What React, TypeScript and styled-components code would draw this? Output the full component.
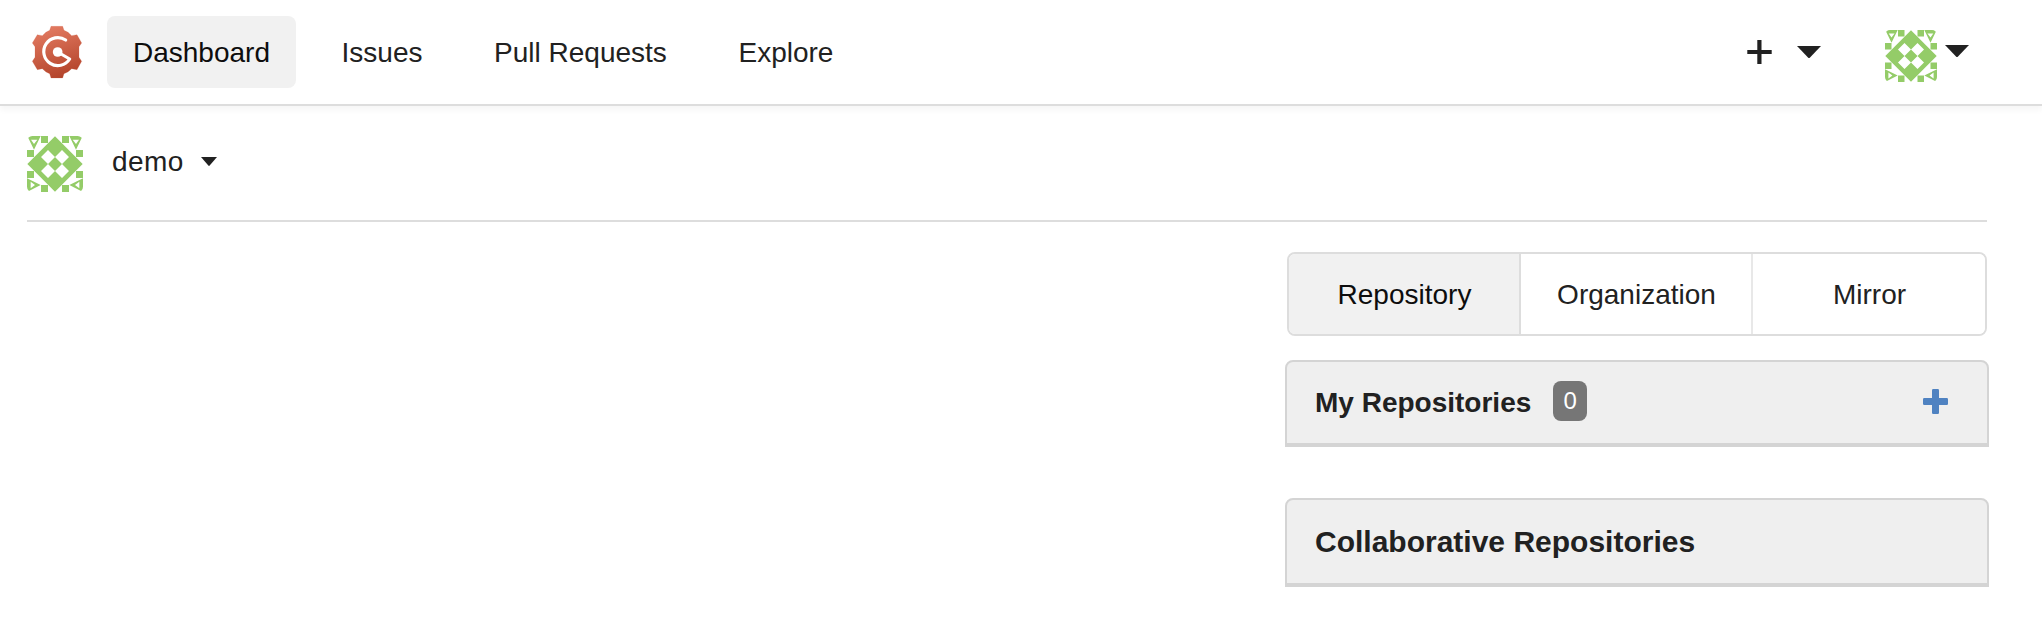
import React from 'react';
import styled, { createGlobalStyle } from 'styled-components';

const GlobalStyle = createGlobalStyle`
  * { box-sizing: border-box; }
  body {
    margin: 0;
    background: #fff;
    color: #212121;
    font-family: "Liberation Sans", Arial, sans-serif;
    font-size: 28px;
    line-height: 32px;
  }
`;

const Header = styled.header`
  display: flex;
  align-items: center;
  height: 106px;
  padding: 0 73px 0 31px;
  border-bottom: 2px solid #ddd;
  box-shadow: 0 4px 6px rgba(0, 0, 0, 0.04);
`;

const LogoLink = styled.a`
  display: flex;
  margin-right: 24px;
`;

const Nav = styled.nav`
  display: flex;
  flex: 1;
  gap: 19.6px;
`;

const NavItem = styled.a<{ $active?: boolean }>`
  display: flex;
  align-items: center;
  height: 72px;
  padding: 1px 26px 0;
  border-radius: 8px;
  color: ${(p) => (p.$active ? '#0d0d0d' : '#212121')};
  background: ${(p) => (p.$active ? '#f1f1f1' : 'transparent')};
`;

const CreateMenu = styled.div`
  display: flex;
  align-items: center;
  gap: 25px;
  margin-right: 64px;
`;

const UserMenu = styled.div`
  display: flex;
  align-items: flex-start;
  gap: 8px;
  padding-top: 8px;

  svg:last-child {
    margin-top: 15px;
  }
`;

const Page = styled.main`
  padding: 0 55px 0 27px;
`;

const ContextBar = styled.div`
  display: flex;
  align-items: center;
  height: 116px;
  border-bottom: 2px solid #ddd;
`;

const ContextSwitch = styled.div`
  display: flex;
  align-items: center;
  height: 56px;
  margin-top: 2px;

  svg:last-child {
    margin-bottom: 5px;
  }
`;

const ContextName = styled.span`
  margin: -4px 17px 0 29px;
  letter-spacing: 0.4px;
`;

const Sidebar = styled.aside`
  display: flex;
  flex-direction: column;
  width: 704px;
  margin: 30px -2px 0 auto;
`;

const Tabs = styled.div`
  display: grid;
  grid-template-columns: 232px 232px 1fr;
  height: 84px;
  margin: 0 2px 24px;
  border: 2px solid #ddd;
  border-radius: 8px;
  overflow: hidden;
`;

const Tab = styled.a<{ $active?: boolean }>`
  display: flex;
  align-items: center;
  justify-content: center;
  padding: 2px 0 0 1px;
  border-right: 2px solid ${(p) => (p.$active ? '#ddd' : '#e8e8e8')};
  color: ${(p) => (p.$active ? '#0d0d0d' : '#212121')};
  background: ${(p) => (p.$active ? '#f1f1f1' : '#fff')};

  &:last-child {
    border-right: 0;
  }
`;

const Panel = styled.h4<{ $large?: boolean }>`
  display: flex;
  align-items: center;
  height: ${(p) => (p.$large ? 89 : 87)}px;
  margin: 0 0 51px;
  padding: 0 39px 0 28px;
  border: 2px solid #d4d4d4;
  border-bottom-width: 4px;
  border-radius: 8px 8px 0 0;
  background: #efefef;
  font-size: ${(p) => (p.$large ? 30 : 28)}px;
  font-weight: 700;

  svg {
    margin-top: -2px;
  }
`;

const Count = styled.span`
  display: flex;
  align-items: center;
  justify-content: center;
  width: 34px;
  height: 40px;
  margin: -3px auto 0 22px;
  border-radius: 8px;
  background: #767676;
  color: #fff;
  font-size: 24px;
  font-weight: 400;
`;

const Logo = () => (
  <svg width="52" height="56" viewBox="93 72 156 168">
    <defs>
      <linearGradient id="gear" x1="0.3" y1="0" x2="0.6" y2="1">
        <stop offset="0" stopColor="#e37b62" />
        <stop offset="1" stopColor="#b3432a" />
      </linearGradient>
    </defs>
    <path
      d="M153 79H188L192 91Q205 95 215 107L231 104L245 129L237 140V172L245 184L231 209L215 206Q205 217 192 221L188 234H153L149 221Q137 217 127 206L112 209L97 184L105 172V140L97 129L112 104L127 107Q137 95 149 91Z"
      fill="url(#gear)"
      stroke="#cf5f45"
      strokeOpacity="0.3"
      strokeWidth="2"
      strokeLinejoin="round"
    />
    <path
      d="M197 120A42 42 0 1 0 209 177L173 156"
      fill="none"
      stroke="#fff"
      strokeWidth="9.5"
      strokeLinecap="round"
      strokeLinejoin="round"
    />
    <circle cx="173" cy="156" r="14.5" fill="#fff" />
  </svg>
);

const squares = [[42, 0], [105, 0], [0, 42], [147, 42], [0, 105], [147, 105], [42, 147], [105, 147]];

const Identicon = ({ size, clip }: { size: number; clip: string }) => (
  <svg width={size} height={size} viewBox="0 0 168 168" fill="#94cc68">
    <clipPath id={clip}>
      <rect width="168" height="168" rx="16" />
    </clipPath>
    <g clipPath={`url(#${clip})`} fillRule="evenodd">
      <path d="M84 1L167 84L84 167L1 84Z M63 42L42 63L63 84L84 63Z M105 42L84 63L105 84L126 63Z M63 84L42 105L63 126L84 105Z M105 84L84 105L105 126L126 105Z" />
      {squares.map(([x, y]) => (
        <rect key={`${x}-${y}`} x={x} y={y} width="21" height="21" />
      ))}
      <path d="M1 0H41L21 41Z M12 11L21 24L31 11Z" />
      <path d="M127 0H167L147 41Z M137 11L147 24L156 11Z" />
      <path d="M0 127V168L41 147Z M11 137L24 147L11 157Z" />
      <path d="M168 127V168L127 147Z M157 137L144 147L157 157Z" />
    </g>
  </svg>
);

const Caret = ({ width, height }: { width: number; height: number }) => (
  <svg width={width} height={height} viewBox="0 0 24 12" preserveAspectRatio="none">
    <path d="M0 0H24L13 11.4Q12 12.4 11 11.4Z" fill="#212121" />
  </svg>
);

const PlusIcon = () => (
  <svg width="25" height="24" viewBox="0 0 25 24" fill="#212121">
    <path d="M10.3 0H14.5V10H24.7V14H14.5V24H10.3V14H0.3V10H10.3Z" />
  </svg>
);

const AddIcon = () => (
  <svg width="25" height="25" viewBox="0 0 25 25" fill="#4f82c1">
    <rect x="9" y="0" width="7" height="25" rx="1.2" />
    <rect x="0" y="9" width="25" height="7" rx="1.2" />
  </svg>
);

export default function App() {
  return (
    <>
      <GlobalStyle />
      <Header>
        <LogoLink><Logo /></LogoLink>
        <Nav>
          <NavItem $active>Dashboard</NavItem>
          <NavItem>Issues</NavItem>
          <NavItem>Pull Requests</NavItem>
          <NavItem>Explore</NavItem>
        </Nav>
        <CreateMenu>
          <PlusIcon />
          <Caret width={24} height={12} />
        </CreateMenu>
        <UserMenu>
          <Identicon size={52} clip="avatar-nav" />
          <Caret width={24} height={12} />
        </UserMenu>
      </Header>
      <Page>
        <ContextBar>
          <ContextSwitch>
            <Identicon size={56} clip="avatar-context" />
            <ContextName>demo</ContextName>
            <Caret width={16} height={9} />
          </ContextSwitch>
        </ContextBar>
        <Sidebar>
          <Tabs>
            <Tab $active>Repository</Tab>
            <Tab>Organization</Tab>
            <Tab>Mirror</Tab>
          </Tabs>
          <Panel>
            My Repositories
            <Count>0</Count>
            <AddIcon />
          </Panel>
          <Panel $large>Collaborative Repositories</Panel>
        </Sidebar>
      </Page>
    </>
  );
}
